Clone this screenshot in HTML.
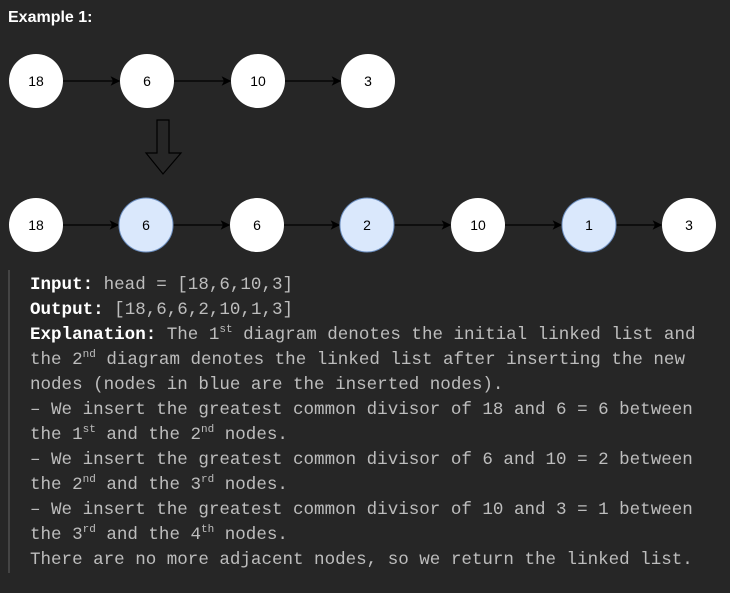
<!DOCTYPE html>
<html><head><meta charset="utf-8"><style>
body{margin:0;background:#262626;width:730px;height:593px;overflow:hidden;position:relative;font-family:"Liberation Sans",sans-serif}
.t{position:absolute;left:8px;top:9px;color:#fff;font-weight:bold;font-size:16px}
pre{position:absolute;left:8px;top:270px;margin:0;border-left:2px solid #444;padding-left:20px;padding-top:3px;height:300px;font-family:"Liberation Mono",monospace;font-size:17.55px;line-height:25px;color:#bdbdbd;white-space:pre}
pre b{color:#fff}
sup{font-size:11px;line-height:0;vertical-align:7px}
</style></head><body>
<div class="t">Example 1:</div>
<svg width="730" height="270" style="position:absolute;left:0;top:0" font-family="Liberation Sans,sans-serif" font-size="14">
<defs><marker id="a" markerWidth="8" markerHeight="8" refX="7" refY="4" orient="auto"><path d="M0,0 L8,4 L0,8 L2,4z" fill="#000"/></marker></defs>
<g stroke="#000" stroke-width="1.2" marker-end="url(#a)">
<line x1="63" y1="81" x2="119" y2="81"/><line x1="174" y1="81" x2="230" y2="81"/><line x1="285" y1="81" x2="340" y2="81"/>
<line x1="63" y1="225" x2="118" y2="225"/><line x1="173" y1="225" x2="229" y2="225"/><line x1="284" y1="225" x2="339" y2="225"/><line x1="394" y1="225" x2="450" y2="225"/><line x1="505" y1="225" x2="561" y2="225"/><line x1="616" y1="225" x2="661" y2="225"/>
</g>
<path d="M157,120 H169 V153 H181 L163,174 L146,153 H157 Z" fill="none" stroke="#000" stroke-width="1.2"/>
<g text-anchor="middle" fill="#000">
<circle cx="36" cy="81" r="27" fill="#fff"/><text x="36" y="86">18</text>
<circle cx="147" cy="81" r="27" fill="#fff"/><text x="147" y="86">6</text>
<circle cx="258" cy="81" r="27" fill="#fff"/><text x="258" y="86">10</text>
<circle cx="368" cy="81" r="27" fill="#fff"/><text x="368" y="86">3</text>
<circle cx="36" cy="225" r="27" fill="#fff"/><text x="36" y="230">18</text>
<circle cx="146" cy="225" r="27" fill="#dae8fc" stroke="#6c8ebf"/><text x="146" y="230">6</text>
<circle cx="257" cy="225" r="27" fill="#fff"/><text x="257" y="230">6</text>
<circle cx="367" cy="225" r="27" fill="#dae8fc" stroke="#6c8ebf"/><text x="367" y="230">2</text>
<circle cx="478" cy="225" r="27" fill="#fff"/><text x="478" y="230">10</text>
<circle cx="589" cy="225" r="27" fill="#dae8fc" stroke="#6c8ebf"/><text x="589" y="230">1</text>
<circle cx="689" cy="225" r="27" fill="#fff"/><text x="689" y="230">3</text>
</g></svg>
<pre><b>Input:</b> head = [18,6,10,3]
<b>Output:</b> [18,6,6,2,10,1,3]
<b>Explanation:</b> The 1<sup>st</sup> diagram denotes the initial linked list and
the 2<sup>nd</sup> diagram denotes the linked list after inserting the new
nodes (nodes in blue are the inserted nodes).
– We insert the greatest common divisor of 18 and 6 = 6 between
the 1<sup>st</sup> and the 2<sup>nd</sup> nodes.
– We insert the greatest common divisor of 6 and 10 = 2 between
the 2<sup>nd</sup> and the 3<sup>rd</sup> nodes.
– We insert the greatest common divisor of 10 and 3 = 1 between
the 3<sup>rd</sup> and the 4<sup>th</sup> nodes.
There are no more adjacent nodes, so we return the linked list.</pre>
</body></html>
